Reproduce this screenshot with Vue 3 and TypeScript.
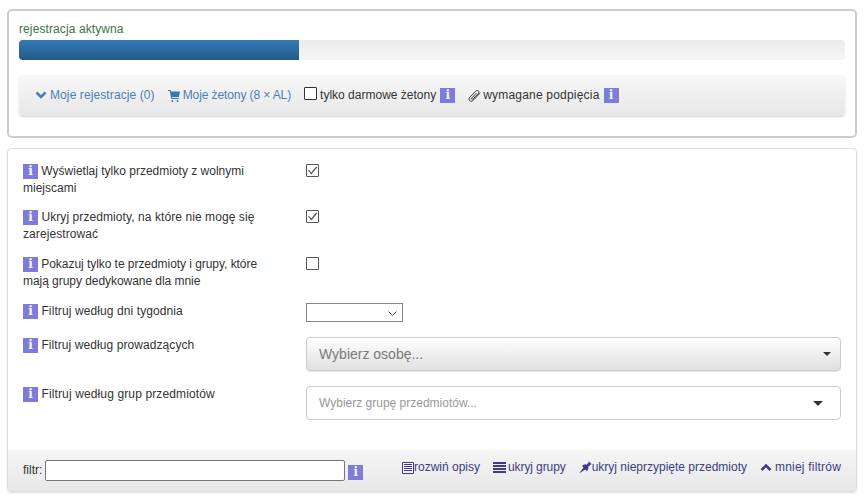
<script setup lang="ts">
interface Row { text: string; kind: 'check' | 'empty' | 'small' | 'person' | 'group'; tall: boolean }
const rows: Row[] = [
  { text: 'Wyświetlaj tylko przedmioty z wolnymi miejscami', kind: 'check', tall: false },
  { text: 'Ukryj przedmioty, na które nie mogę się zarejestrować', kind: 'check', tall: true },
  { text: 'Pokazuj tylko te przedmioty i grupy, które mają grupy dedykowane dla mnie', kind: 'empty', tall: true },
  { text: 'Filtruj według dni tygodnia', kind: 'small', tall: false },
  { text: 'Filtruj według prowadzących', kind: 'person', tall: false },
  { text: 'Filtruj według grup przedmiotów', kind: 'group', tall: false },
]
</script>

<template>
  <div class="page">
    <section class="top">
      <div class="status">rejestracja aktywna</div>
      <div class="track"><div class="fill"></div></div>
      <nav class="bar">
        <a class="blue first">
          <svg class="ic chev" viewBox="0 0 12 9"><path d="M1.500 1.500 6 6 10.500 1.500" fill="none" stroke="currentColor" stroke-width="2.600"/></svg>
          <span class="wide">Moje rejestracje (0)</span>
        </a>
        <a class="blue second">
          <svg class="ic cart" viewBox="0 0 12 12"><path d="M0 0h2.600l.5 1.500H12l-1.100 5.500H4l.2 1h6.600v1H3.300L1.800 1H0z" fill="currentColor"/><circle cx="4.300" cy="11" r="1" fill="currentColor"/><circle cx="9.500" cy="11" r="1" fill="currentColor"/></svg>
          <span class="narrow">Moje żetony (8 × AL)</span>
        </a>
        <span class="box-big"></span>
        <span class="plain free">tylko darmowe żetony</span>
        <span class="info mid">i</span>
        <svg class="ic clip" viewBox="0 0 13 12"><path d="M12.300 2.800 5.600 9.900c-1.300 1.400-2.900 1.700-3.900.8-1-1-.8-2.500.4-3.800L7.400 1.400c1-1 2.200-1.200 3-.5.800.8.600 1.900-.4 2.900L5.200 8.800c-.6.600-1.200.7-1.500.4-.4-.4-.2-1 .3-1.500l4.300-4.500" fill="none" stroke="#3a3a3a" stroke-width="1"/></svg>
        <span class="plain spaced">wymagane podpięcia</span>
        <span class="info mid">i</span>
      </nav>
    </section>

    <section class="filters">
      <div class="rows">
        <div v-for="r in rows" :key="r.text" class="row" :class="{ tall: r.tall }">
          <div class="label"><span class="info">i</span> {{ r.text }}</div>
          <div class="ctrl">
            <span v-if="r.kind === 'check' || r.kind === 'empty'" class="check">
              <svg v-if="r.kind === 'check'" viewBox="0 0 11 11"><path d="M1.500 5 4.300 8.500 9.700 2" fill="none" stroke="#555" stroke-width="1.200"/></svg>
            </span>
            <span v-else-if="r.kind === 'small'" class="small-select">
              <svg viewBox="0 0 9 5"><path d="M.500.500 4.500 4.500 8.500.500" fill="none" stroke="#555" stroke-width="1"/></svg>
            </span>
            <div v-else-if="r.kind === 'person'" class="person">
              <span>Wybierz osobę...</span><i class="caret"></i>
            </div>
            <div v-else class="group">
              <span>Wybierz grupę przedmiotów...</span><i class="caret big"></i>
            </div>
          </div>
        </div>
      </div>
      <footer class="foot">
        <span class="filter-label">filtr:</span>
        <input class="search" type="text" />
        <span class="info foot-info">i</span>
        <div class="links">
          <a><svg class="ic list" viewBox="0 0 12 12"><path d="M.500.500h11v11H.500z" fill="none" stroke="currentColor"/><path d="M2 2.500h8M2 4.500h8M2 6.500h8M2 8.500h8" stroke="currentColor"/></svg>rozwiń opisy</a>
          <a><svg class="ic lines" viewBox="0 0 13 11"><path d="M0 0h13v2H0zM0 3h13v2H0zM0 6h13v2H0zM0 9h13v2H0z" fill="currentColor"/></svg><span class="tight">ukryj grupy</span></a>
          <a><svg class="ic pin" viewBox="0 0 13 13"><path d="M0 12.500 4.500 6.500 3 5l1-1c1.200-.6 2.500-.6 3.500-.2L10 1 9.500 0 13 3.500 12 3.200 9.200 5.700c.3 1 .2 2.200-.4 3.300l-1 1L6.300 8.500z" fill="currentColor"/></svg>ukryj nieprzypięte przedmioty</a>
          <a><svg class="ic chev up" viewBox="0 0 12 9"><path d="M1.500 7 6 2.500 10.500 7" fill="none" stroke="currentColor" stroke-width="2.600"/></svg><span class="spaced">mniej filtrów</span></a>
        </div>
      </footer>
    </section>
  </div>
</template>

<style>
html, body { margin: 0; background: #fff; }
</style>

<style scoped>
.page {
  width: 864px;
  height: 502px;
  padding: 9px 7px 0;
  box-sizing: border-box;
  font: 12px/17px "Liberation Sans", Arial, sans-serif;
  color: #333;
  overflow: hidden;
}
.top {
  height: 129px;
  box-sizing: border-box;
  border: 2px solid #ccc;
  border-radius: 5px;
  padding: 10px 10px 0;
}
.status { color: #3c763d; height: 19px; line-height: 17px; letter-spacing: .1px; }
.track {
  height: 20px;
  border-radius: 4px;
  background: linear-gradient(#ebebeb, #f5f5f5);
  overflow: hidden;
}
.fill {
  width: 280px;
  height: 100%;
  background: linear-gradient(#337ab7, #265a88);
}
.bar {
  margin-top: 15px;
  height: 41px;
  box-sizing: border-box;
  border-radius: 4px;
  background: linear-gradient(#f8f8f8, #e7e7e7);
  box-shadow: 0 1px 2px rgba(0,0,0,.18);
  display: flex;
  align-items: center;
  padding-left: 16px;
}
.blue { color: #4a7fb5; display: inline-flex; align-items: center; gap: 3px; white-space: nowrap; }
.second { margin-left: 13px; }
.wide { letter-spacing: .1px; }
.narrow { letter-spacing: -.1px; }
.spaced { letter-spacing: .2px; }
.tight { letter-spacing: -.1px; }
.ic { display: inline-block; flex: none; }
.chev { width: 12px; height: 9px; }
.cart { width: 12px; height: 12px; color: #337ab7; }
.box-big {
  width: 11px;
  height: 11px;
  border: 1px solid #333;
  margin-left: 13px;
  margin-top: -4px;
  border-radius: 1px;
  background: #fff;
}
.plain { white-space: nowrap; }
.free { margin-left: 3px; }
.info {
  display: inline-block;
  width: 15px;
  height: 15px;
  background: #7f7bd9;
  color: #f4f4ff;
  font: bold 12px/15px "DejaVu Serif", serif;
  text-align: center;
}
.mid { margin-left: 4px; }
.clip { width: 13px; height: 12px; margin-left: 13px; margin-right: 2px; }
.filters {
  margin-top: 10px;
  height: 344px;
  box-sizing: border-box;
  border: 1px solid #ddd;
  border-radius: 4px;
  box-shadow: 0 1px 2px rgba(0,0,0,.12);
  display: flex;
  flex-direction: column;
}
.rows { padding: 14px 15px 0; flex: 1; }
.row {
  display: grid;
  grid-template-columns: 283px 1fr;
  padding-bottom: 12px;
}
.row.tall { padding-bottom: 13px; }
.row:nth-child(4), .row:nth-child(5) { padding-bottom: 15px; }
.row:nth-child(2) .label { letter-spacing: .08px; }
.row:nth-child(3) .label { letter-spacing: -.05px; }
.row:nth-child(4) .label { letter-spacing: .1px; }
.row:nth-child(5) .label { letter-spacing: .08px; }
.row:nth-child(6) .label { letter-spacing: .13px; }
.label { width: 245px; }
.ctrl { display: flex; align-items: flex-start; }
.check {
  width: 11px;
  height: 11px;
  margin-top: 1px;
  border: 1px solid #555;
  border-radius: 1px;
  display: block;
}
.check svg { display: block; width: 11px; height: 11px; }
.small-select {
  width: 97px;
  height: 19px;
  box-sizing: border-box;
  border: 1px solid #888;
  position: relative;
  display: block;
}
.small-select svg { position: absolute; right: 5px; top: 7px; width: 9px; height: 5px; }
.person, .group {
  width: 535px;
  height: 34px;
  box-sizing: border-box;
  border: 1px solid #ccc;
  border-radius: 4px;
  display: flex;
  align-items: center;
  justify-content: space-between;
}
.person {
  padding: 0 9px 0 12px;
  background: linear-gradient(#fff, #e0e0e0);
  color: #7a7a7a;
  font-size: 14px;
  box-shadow: 0 1px 1px rgba(0,0,0,.1);
}
.group {
  padding: 0 17px 0 12px;
  background: #fff;
  color: #999;
  font-size: 12px;
}
.caret {
  border-top: 4px solid #333;
  border-left: 4px solid transparent;
  border-right: 4px solid transparent;
}
.caret.big {
  border-top-width: 5px;
  border-left-width: 5px;
  border-right-width: 5px;
}
.foot {
  height: 41px;
  box-sizing: border-box;
  background: linear-gradient(#f5f5f5, #e8e8e8);
  display: flex;
  align-items: center;
  padding: 0 15px;
  border-radius: 0 0 4px 4px;
}
.filter-label { margin-right: 3px; }
.search {
  width: 300px;
  height: 21px;
  box-sizing: border-box;
  border: 1px solid #767676;
  border-radius: 2px;
  background: #fff;
  padding: 0;
  margin: 0;
}
.foot-info { margin: 3px 0 0 3px; }
.links {
  margin-left: auto;
  margin-bottom: 6px;
  display: flex;
  gap: 13px;
  color: #3f3c85;
  white-space: nowrap;
}
.links a { display: inline-flex; align-items: center; }
.list { width: 12px; height: 12px; }
.lines { width: 13px; height: 11px; margin-right: 2px; }
.pin { width: 13px; height: 13px; }
.up { margin-right: 3px; }
</style>
